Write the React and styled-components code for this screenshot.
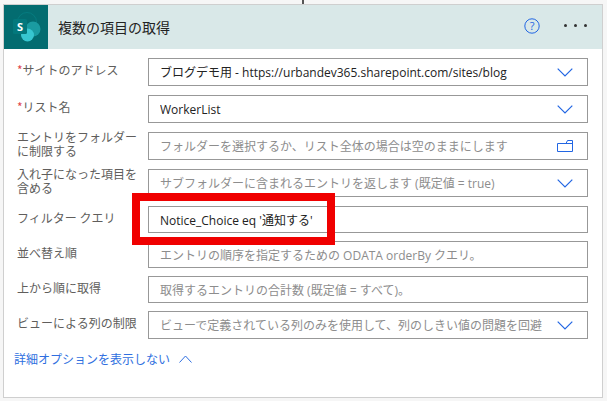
import React from 'react';
import styled, { createGlobalStyle } from 'styled-components';

const Global = createGlobalStyle`
  html, body { margin: 0; padding: 0; background: #f6f6f6; }
  body { font-family: "Open Sans", "Noto Sans CJK JP", sans-serif; }
`;

const Page = styled.div`
  position: relative;
  width: 607px;
  height: 401px;
  padding: 4px 4px 0 3px;
  box-sizing: border-box;
  overflow: hidden;
`;

const Connector = styled.div`
  position: absolute;
  left: 302px;
  width: 2px;
  background: #555;
  ${p => (p.$top ? 'top: 0; height: 4px;' : 'bottom: 0; height: 3px;')}
`;

const Card = styled.div`
  height: 394px;
  box-sizing: border-box;
  border: 1px solid #cfcfcf;
  background: #fff;
`;

const Header = styled.div`
  height: 44px;
  display: flex;
  align-items: center;
  background: #d9e8e8;
`;

const LogoBox = styled.div`
  width: 44px;
  height: 44px;
  background: #036c70;
  display: flex;
  align-items: center;
  justify-content: center;
`;

const Title = styled.div`
  flex: 1;
  margin-left: 10px;
  font-size: 14px;
  color: #222;
  font-family: "Noto Sans CJK JP", sans-serif;
`;

const HelpIcon = styled.svg`
  width: 16px;
  height: 16px;
  margin-right: 24px;
  margin-top: -3px;
`;

const Dots = styled.div`
  display: flex;
  gap: 7px;
  margin-right: 15px;
  margin-top: -3px;
`;

const Dot = styled.span`
  width: 3px;
  height: 3px;
  border-radius: 50%;
  background: #333;
`;

const Form = styled.div`
  display: flex;
  flex-direction: column;
  padding: 9px 14px 0 13px;
`;

const Row = styled.div`
  display: flex;
  align-items: center;
  height: ${p => p.$h || 28}px;
  margin-bottom: ${p => (p.$gap === undefined ? 9 : p.$gap)}px;
`;

const Label = styled.div`
  width: 131px;
  flex: none;
  font-size: 12px;
  line-height: 14px;
  color: #605e5c;
  font-family: "Noto Sans CJK JP", sans-serif;
  margin-top: -4px;
`;

const Star = styled.span`
  color: #e0464c;
`;

const Field = styled.div`
  flex: 1;
  height: 100%;
  box-sizing: border-box;
  border: 1px solid #989898;
  display: flex;
  align-items: center;
  padding: 0 14px 0 11px;
  background: #fff;
  min-width: 0;
`;

const Value = styled.div`
  flex: 1;
  min-width: 0;
  white-space: nowrap;
  overflow: hidden;
  font-size: 12px;
  color: ${p => (p.$placeholder ? '#8d8d8d' : '#222')};
  font-family: "Open Sans", "Noto Sans CJK JP", sans-serif;
`;

const FieldIcon = styled.svg`
  flex: none;
  margin-left: 8px;
`;

const Toggle = styled.div`
  display: flex;
  align-items: center;
  gap: 9px;
  margin-top: 11px;
  font-size: 12px;
  color: #2f6fe0;
  font-family: "Noto Sans CJK JP", sans-serif;
  margin-left: -3px;
`;

const Highlight = styled.div`
  position: absolute;
  left: 132px;
  top: 193px;
  width: 203px;
  height: 52px;
  box-sizing: border-box;
  border: 8px solid #f00000;
  pointer-events: none;
`;

const Chevron = () => (
  <FieldIcon width="16" height="9" viewBox="0 0 16 9">
    <path d="M0.7 0.7 L8 8 L15.3 0.7" fill="none" stroke="#2266e3" strokeWidth="1.2" />
  </FieldIcon>
);

const Folder = () => (
  <FieldIcon width="16" height="12" viewBox="0 0 16 12">
    <path d="M0.5 3.5 H9 L10.5 0.5 H15.5 V11.5 H0.5 Z M9 3.5 H15.5" fill="none" stroke="#2266e3" strokeWidth="1" />
  </FieldIcon>
);

const SharePointLogo = () => (
  <svg width="32" height="32" viewBox="0 0 32 32">
    <circle cx="17" cy="11" r="9.5" fill="#036c70" stroke="#0a8a8e" strokeWidth="0.5" />
    <circle cx="23" cy="18" r="7.5" fill="#1a9ba1" />
    <circle cx="17.5" cy="24" r="6.5" fill="#37c6d0" />
    <rect x="3" y="8" width="14" height="15" rx="1.5" fill="#03787c" />
    <text x="10" y="20" textAnchor="middle" fontSize="11" fontWeight="700" fill="#fff" fontFamily="'Open Sans', sans-serif">S</text>
  </svg>
);

export default function App() {
  return (
    <Page>
      <Global />
      <Connector $top />
      <Card>
        <Header>
          <LogoBox><SharePointLogo /></LogoBox>
          <Title>複数の項目の取得</Title>
          <HelpIcon viewBox="0 0 16 16">
            <circle cx="8" cy="8" r="7.2" fill="none" stroke="#2266e3" strokeWidth="1" />
            <text x="8" y="12" textAnchor="middle" fontSize="11" fill="#2266e3" fontFamily="'Open Sans', sans-serif">?</text>
          </HelpIcon>
          <Dots><Dot /><Dot /><Dot /></Dots>
        </Header>
        <Form>
          <Row>
            <Label><Star>*</Star>サイトのアドレス</Label>
            <Field><Value>ブログデモ用 - https://urbandev365.sharepoint.com/sites/blog</Value><Chevron /></Field>
          </Row>
          <Row>
            <Label><Star>*</Star>リスト名</Label>
            <Field><Value>WorkerList</Value><Chevron /></Field>
          </Row>
          <Row>
            <Label>エントリをフォルダーに制限する</Label>
            <Field><Value $placeholder>フォルダーを選択するか、リスト全体の場合は空のままにします</Value><Folder /></Field>
          </Row>
          <Row>
            <Label>入れ子になった項目を含める</Label>
            <Field><Value $placeholder>サブフォルダーに含まれるエントリを返します (既定値 = true)</Value><Chevron /></Field>
          </Row>
          <Row $h={27} $gap={8}>
            <Label>フィルター クエリ</Label>
            <Field><Value>Notice_Choice eq '通知する'</Value></Field>
          </Row>
          <Row $h={27} $gap={8}>
            <Label>並べ替え順</Label>
            <Field><Value $placeholder>エントリの順序を指定するための ODATA orderBy クエリ。</Value></Field>
          </Row>
          <Row $h={27} $gap={8}>
            <Label>上から順に取得</Label>
            <Field><Value $placeholder>取得するエントリの合計数 (既定値 = すべて)。</Value></Field>
          </Row>
          <Row $gap={0}>
            <Label>ビューによる列の制限</Label>
            <Field><Value $placeholder>ビューで定義されている列のみを使用して、列のしきい値の問題を回避</Value><Chevron /></Field>
          </Row>
          <Toggle>
            詳細オプションを表示しない
            <svg width="13" height="8" viewBox="0 0 13 8">
              <path d="M0.5 7.5 L6.5 1 L12.5 7.5" fill="none" stroke="#2f6fe0" strokeWidth="1" />
            </svg>
          </Toggle>
        </Form>
      </Card>
      <Highlight />
    </Page>
  );
}
